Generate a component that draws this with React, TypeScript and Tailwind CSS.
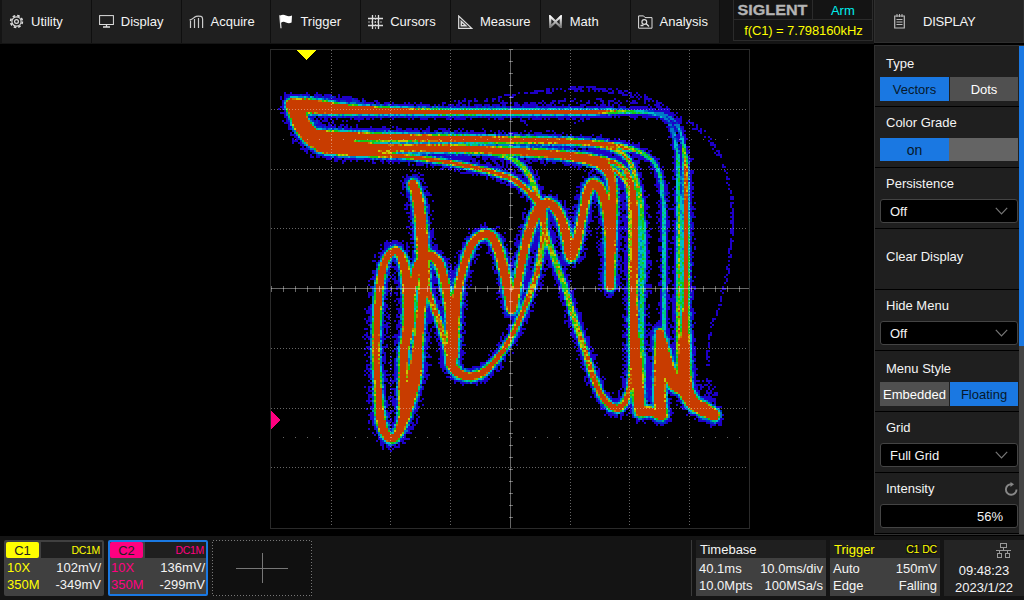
import React, { useMemo } from "react";

/* ---------- XY persistence trace ---------- */

// Each strand point is [x, y, core radius, heat]
type Pt = [number, number, number, number];
type Strand = { pts: Pt[]; halo: number; sparse?: number };

const STRANDS: Strand[] = [
  // top line falling into the first vertical
  { halo: 1.5, pts: [[292, 104, 4.5, 6], [310, 106, 6, 6], [335, 108.5, 4.5, 6], [360, 110, 3, 5.8], [400, 111, 2, 5.7], [440, 112, 1.5, 5.6], [510, 112, 1.3, 5.6], [595, 112, 1.1, 5.4], [615, 111.5, 1, 4.6], [635, 112, 1, 3.4], [655, 114, 1, 2.1], [668, 121, 1.5, 1.4], [675, 140, 1.5, 2], [678, 160, 1.1, 3], [679, 200, 1.1, 3.7], [679, 260, 1.2, 4.2], [679, 330, 1.3, 4.7], [681, 380, 3, 5.7]] },
  { halo: 3, pts: [[635, 112, 1, 3], [660, 114, 1.5, 1.8], [674, 121, 2, 1.3], [681, 135, 1, 2], [684, 150, 1, 3.6], [685.5, 165, 1.1, 5.1], [686, 200, 1.3, 5.3], [686, 300, 1.8, 5.5], [685, 335, 2.8, 6], [685, 390, 5, 6]] },
  // left corner
  { halo: 6, pts: [[291, 105, 4, 6], [297, 113, 7, 6], [302, 125, 7, 6], [311, 136, 7.5, 6], [324, 144, 7, 6], [345, 146.5, 6, 6], [375, 148, 3.5, 6]] },
  { halo: 3, pts: [[310, 134, 4, 6], [340, 136, 3.3, 6], [400, 137.5, 2.4, 5.8], [470, 139, 2.2, 5.7], [510, 140, 2.1, 5.6], [560, 141, 1.8, 5.6], [600, 144, 1.8, 5.5], [622, 147, 1.5, 5], [642, 153, 1.2, 4], [655, 164, 1.2, 3.1], [661, 180, 1.2, 2.8], [664, 220, 1.2, 2.7], [664, 330, 1.2, 2.7]] },
  { halo: 4, pts: [[320, 147, 4, 6], [400, 148, 2.3, 6], [450, 148.5, 2.6, 6], [510, 151, 2.5, 5.8], [560, 155, 3, 5.8], [590, 160, 3.7, 5.9], [604, 166, 4, 5.9], [611, 178, 3, 5.8], [613, 200, 3, 5.7], [612, 230, 3, 5.7], [610, 286, 3.2, 5.7]] },
  { halo: 4, pts: [[585, 156, 1.4, 5.5], [606, 160, 1.3, 5.1], [622, 167, 1.3, 5], [630, 180, 1.7, 5.4], [634, 205, 2.7, 5.7], [634.5, 250, 2.7, 5.7], [633.5, 300, 2.7, 5.7], [635, 360, 4, 6], [640, 412, 3.5, 6]] },
  { halo: 4, pts: [[600, 145, 1.2, 5.1], [620, 152, 1.2, 4.7], [631, 164, 1.3, 4.5], [637, 183, 1.3, 4.5], [641, 205, 1.4, 3.9], [643, 240, 1.6, 3.3], [642, 330, 1.6, 3.2], [643, 380, 1.5, 4]] },
  { halo: 3, pts: [[600, 162, 1.2, 5], [617, 172, 1.2, 4.7], [627, 184, 1.2, 4.5], [630, 215, 1.2, 4.2], [630, 300, 1.2, 3.8]] },
  // lower branch and large loop
  { halo: 3, pts: [[325, 149, 3.5, 6], [350, 152.5, 2, 6], [400, 156, 1.2, 5.4], [440, 161, 1.2, 5.3], [480, 169, 1.3, 5.4], [510, 178, 1.5, 5.4], [528, 191, 1.7, 5.5], [541, 207, 3, 5.7], [544, 228, 2.2, 4.9], [541, 252, 2, 4.5], [536, 276, 1.9, 4.8], [526, 304, 1.6, 5.4], [510, 339, 1.5, 5.4], [495, 361, 1.8, 5.6], [482, 373, 2.6, 5.7], [468, 376.5, 3, 5.8], [457, 372, 3.5, 5.8], [450, 362, 3.5, 5.7]] },
  { halo: 4, pts: [[470, 149, 1, 4.8], [500, 155, 1.2, 3.8], [517, 162, 1.4, 3.9], [529, 175, 1.8, 4.2], [536, 192, 1.8, 4.4], [542, 215, 2.2, 5], [546, 235, 2, 4.7], [553, 255, 1.9, 4.3], [564, 285, 1.9, 4.1], [574, 318, 2, 4.3], [584, 348, 2, 4.7], [596, 384, 1.8, 5.4], [607, 403, 2, 5.7], [617, 408.5, 2.6, 5.7], [625, 402, 2, 5.5], [630, 385, 1.6, 5], [632, 350, 1.3, 4.6]] },
  // lower-left loops
  { halo: 6, pts: [[413, 184, 3.5, 5.8], [418, 200, 4.3, 5.8], [421, 225, 4.3, 5.8], [423, 255, 5, 5.8], [424, 282, 4.3, 5.8], [421, 310, 3, 5.8], [418, 345, 3.5, 5.8], [415, 372, 5.5, 5.8], [410, 395, 5.5, 5.8], [404, 418, 4, 5.8], [397, 435, 3, 5.8], [391, 439, 3, 5.8], [384, 431, 3.2, 5.8], [380, 415, 3.3, 5.8], [378, 385, 2.2, 5.7], [376, 350, 2.4, 5.7], [378, 305, 2.6, 5.7], [382, 272, 2.7, 5.7], [388, 256, 2.4, 5.7], [396, 250.5, 2.6, 5.7], [402, 259, 3.2, 5.8], [407, 282, 4, 5.8], [409, 320, 4.6, 5.8], [404, 352, 3.3, 5.8], [403, 390, 3.3, 5.8], [402, 415, 2, 5.8]] },
  { halo: 4, pts: [[410, 310, 2, 5.6], [414, 285, 2.5, 5.7], [418, 265, 3, 5.8], [428, 255, 3.2, 5.8], [438, 262, 3.5, 5.8], [444, 280, 3, 5.8], [449, 308, 3, 5.7], [452, 340, 4, 5.8], [452, 362, 3.5, 5.8]] },
  { halo: 4.5, pts: [[453, 355, 4, 5.8], [455, 310, 4, 5.8], [458, 290, 3, 5.8], [464, 265, 2.7, 5.7], [472, 244, 2.8, 5.7], [482, 235, 3, 5.8], [491, 236, 3.4, 5.8], [499, 252, 3.5, 5.8], [505, 275, 3.5, 5.8], [510, 300, 3.5, 5.8], [512, 309, 3.5, 5.8], [517, 286, 3, 5.8], [524, 251, 2.8, 5.7], [532, 223, 3.4, 5.8], [540, 208, 4, 5.8], [549, 203, 3.2, 5.8], [558, 212, 3.4, 5.8], [566, 234, 3.5, 5.8], [571, 257, 3.5, 5.8], [577, 241, 3.5, 5.8], [583, 213, 2.7, 5.7], [588, 191, 3.2, 5.8], [593, 183.5, 3.4, 5.8], [601, 190, 3.5, 5.8], [607, 212, 3.5, 5.8], [610, 240, 3.6, 5.8], [610, 286, 3.2, 5.8]] },
  { halo: 4, pts: [[424, 282, 3, 5.7], [432, 303, 1.6, 5.2], [440, 325, 1.8, 5], [445, 343, 1.7, 4.7], [450, 364, 2, 5.3]] },
  // bottom-right cluster
  { halo: 4, pts: [[636, 340, 2.5, 6], [638, 385, 4.5, 6], [641, 411, 4, 6], [649, 411, 3, 6], [660, 415, 3.5, 6]] },
  { halo: 4, pts: [[660, 333, 3, 6], [660, 370, 4.5, 6], [660, 400, 4.5, 6], [662, 415, 4, 6]] },
  { halo: 4, pts: [[662, 340, 3, 6], [667, 365, 5, 6], [675, 383, 6, 6], [684, 389, 6, 6], [693, 403, 5.5, 6], [705, 410, 5.5, 6], [714, 415, 4.5, 6]] },
  { halo: 3, pts: [[685, 335, 3, 6], [684, 375, 6, 6], [686, 393, 5, 6]] },
  // faint excursions
  { halo: 1, sparse: 0.55, pts: [[500, 98, 1, 0], [520, 94, 1, 0], [560, 90, 1.5, 0], [590, 89, 1.5, 0], [620, 92, 2, 0], [645, 98, 2, 0], [662, 107, 2.5, 0], [676, 118, 2.5, 0], [690, 124, 2, 0], [705, 135, 2, 0], [716, 150, 1.5, 0], [727, 175, 1, 0], [732, 205, 1, 0], [732, 232, 1, 0], [728, 268, 1, 0], [720, 302, 1, 0], [711, 330, 1, 0], [708, 365, 1, 0]] },
  { halo: 2, sparse: 0.42, pts: [[370, 104, 2, 0], [440, 106, 1.5, 0], [510, 105, 1, 0], [560, 102, 1, 0], [620, 102, 1.5, 0], [655, 109, 2, 0], [675, 119, 5, 0]] },
  { halo: 3, sparse: 0.85, pts: [[300, 97, 2, 0], [330, 99, 3, 0], [365, 104, 2, 0]] },
  { halo: 2, sparse: 0.22, pts: [[440, 106, 2, 0], [480, 101, 3, 0], [510, 97, 1, 0]] },
  { halo: 3, sparse: 0.4, pts: [[310, 118, 3, 0], [340, 119, 2, 0], [370, 118, 1, 0]] },
  { halo: 3, sparse: 0.35, pts: [[330, 128, 2, 0], [370, 130, 2, 0], [440, 131, 1, 0]] },
  { halo: 3, sparse: 0.8, pts: [[314, 117, 3, 0], [314, 125, 4, 0], [325, 129, 3, 0]] },
  { halo: 3, sparse: 0.5, pts: [[700, 383, 3, 0], [708, 386, 4, 0], [711, 398, 4, 0]] },
  { halo: 2, sparse: 0.4, pts: [[649, 350, 2, 0], [649, 375, 5, 0], [651, 395, 3, 0]] },
  { halo: 2, sparse: 0.4, pts: [[670, 300, 3, 0], [672, 345, 4, 0], [674, 362, 2, 0]] },
  { halo: 2, sparse: 0.12, pts: [[515, 121, 3, 0], [530, 121, 2, 0]] },
  { halo: 2, sparse: 0.12, pts: [[565, 120, 2, 0], [582, 120, 2, 0]] },
];

const PALETTE: [number, string][] = [
  [5, "#c83c00"],
  [4.7, "#c87800"],
  [4.35, "#c8c800"],
  [4.0, "#78c800"],
  [3.4, "#14c814"],
  [2.9, "#00c878"],
  [2.2, "#00bec8"],
  [1.5, "#0078c8"],
  [0.9, "#0032c8"],
  [0.1, "#1e00c8"],
];

function noise(x: number, y: number) {
  let n = (Math.imul(x, 374761393) + Math.imul(y, 668265263)) | 0;
  n = Math.imul(n ^ (n >>> 13), 1274126177);
  return ((n ^ (n >>> 16)) >>> 0) / 4294967296;
}

function smooth(pts: Pt[]): Pt[] {
  const out: Pt[] = [];
  for (let i = 0; i < pts.length - 1; i++) {
    const a = pts[Math.max(0, i - 1)];
    const b = pts[i];
    const c = pts[i + 1];
    const d = pts[Math.min(pts.length - 1, i + 2)];
    const len = Math.hypot(c[0] - b[0], c[1] - b[1]);
    const steps = Math.max(2, Math.ceil(len));
    // tangents are scaled by local chord ratio so uneven spacing does not overshoot
    const lp = Math.hypot(b[0] - a[0], b[1] - a[1]) || len;
    const ln = Math.hypot(d[0] - c[0], d[1] - c[1]) || len;
    for (let s = 0; s < steps; s++) {
      const t = s / steps;
      const t2 = t * t;
      const t3 = t2 * t;
      const p = [0, 0];
      for (const k of [0, 1]) {
        const m1 = ((c[k] - a[k]) * len) / (len + lp);
        const m2 = ((d[k] - b[k]) * len) / (len + ln);
        p[k] = (2 * t3 - 3 * t2 + 1) * b[k] + (t3 - 2 * t2 + t) * m1 + (-2 * t3 + 3 * t2) * c[k] + (t3 - t2) * m2;
      }
      out.push([p[0], p[1], b[2] + (c[2] - b[2]) * t, b[3] + (c[3] - b[3]) * t]);
    }
  }
  out.push(pts[pts.length - 1]);
  return out;
}

function buildTrace() {
  const N = 240;
  const OX = 270;
  const OY = 50;
  const level = new Float32Array(N * N);
  STRANDS.forEach((s, si) => {
    const best = new Float32Array(N * N).fill(-99);
    for (const [x, y, r, h] of smooth(s.pts)) {
      const R = r + s.halo + 6;
      const x0 = Math.max(0, Math.floor((x - R - OX) / 2));
      const x1 = Math.min(N - 1, Math.ceil((x + R - OX) / 2));
      const y0 = Math.max(0, Math.floor((y - R - OY) / 2));
      const y1 = Math.min(N - 1, Math.ceil((y + R - OY) / 2));
      for (let j = y0; j <= y1; j++)
        for (let i = x0; i <= x1; i++) {
          const e = Math.max(0, Math.hypot(OX + i * 2 + 1 - x, OY + j * 2 + 1 - y) - r);
          const n = noise(i + si * 311, j + si * 97);
          let v = -99;
          if (s.sparse) {
            if (e < s.halo && n < s.sparse * (1 - e / (s.halo + 1))) v = 0.3 + n;
          } else {
            // steep edge next to the core, then a slower fade
            v = h - 1.7 * Math.min(e, 2) - 0.85 * Math.max(0, e - 2);
            if (e > 0 || h < 5.3) v += (n - 0.5) * 1.3;
            if (v < 0.9) {
              const solid = Math.min(h * 0.75, 3.9);
              const prob = 0.9 - (e - solid) / (s.halo + 2);
              v = e < solid || n < prob * 0.85 ? 0.3 : -99;
            }
          }
          const q = j * N + i;
          if (v > best[q]) best[q] = v;
        }
    }
    for (let q = 0; q < best.length; q++) if (best[q] > level[q]) level[q] = best[q];
  });
  const paths = PALETTE.map(() => "");
  for (let j = 0; j < N; j++) {
    let i = 0;
    while (i < N) {
      const c = PALETTE.findIndex(([t]) => level[j * N + i] >= t);
      let k = i + 1;
      while (k < N && PALETTE.findIndex(([t]) => level[j * N + k] >= t) === c) k++;
      if (c >= 0) paths[c] += `M${i * 2} ${j * 2 + 1}h${(k - i) * 2}v2h${(i - k) * 2}z`;
      i = k;
    }
  }
  return paths;
}

const steps = (from: number, to: number, by: number) =>
  Array.from({ length: Math.floor((to - from) / by) + 1 }, (_, i) => from + i * by);

function Scope() {
  const paths = useMemo(buildTrace, []);
  return (
    <svg width="480" height="480" viewBox="0 0 480 480" shapeRendering="crispEdges" className="block shrink-0">
      {paths.map((d, i) => (
        <path key={i} d={d} fill={PALETTE[i][1]} />
      ))}
      <rect x="0.5" y="0.5" width="479" height="479" fill="none" stroke="#2a2a2a" />
      <g stroke="#fff" strokeOpacity="0.4" strokeWidth="1">
        {[61, 120, 180, 300, 359, 419].map((x) => (
          <line key={x} x1={x + 0.5} x2={x + 0.5} y1="1" y2="478" strokeDasharray="1 2" />
        ))}
        {[60, 120, 179, 299, 359, 418].map((y) => (
          <line key={y} y1={y + 0.5} y2={y + 0.5} x1="1" x2="478" strokeDasharray="1 2" />
        ))}
        {[90, 388].map((y) => (
          <line key={y} y1={y + 0.5} y2={y + 0.5} x1="13" x2="470" strokeDasharray="1 11" />
        ))}
        <line x1="240.5" x2="240.5" y1="1" y2="479" />
        <line x1="1" x2="479" y1="239.5" y2="239.5" />
        {steps(1, 470, 12).map((p) => (
          <React.Fragment key={p}>
            <line x1={p + 0.5} x2={p + 0.5} y1="237" y2="243" />
            <line y1={p - 0.5} y2={p - 0.5} x1="239" x2="243" />
          </React.Fragment>
        ))}
      </g>
      <polygon points="26,1 46,1 36,11" fill="#ff0" />
      <polygon points="1,362 10,371 1,380" fill="#ff0080" />
    </svg>
  );
}

/* ---------- Icons ---------- */

const ico = "block shrink-0";

const GearIcon = () => (
  <svg width="15" height="15" viewBox="0 0 15 15" className={ico} fill="none" stroke="#ddd">
    <circle cx="7.5" cy="7.5" r="5.9" strokeWidth="1.6" strokeDasharray="2.6 2.03" />
    <circle cx="7.5" cy="7.5" r="4.6" strokeWidth="1.1" />
    <circle cx="7.5" cy="7.5" r="1.9" strokeWidth="1.2" />
  </svg>
);
const MonitorIcon = () => (
  <svg width="15" height="13" viewBox="0 0 15 13" className={ico} fill="none" stroke="#ddd">
    <rect x="0.6" y="0.6" width="13.8" height="8.9" />
    <path d="M7.5 9.5v2.2M4 12h7" strokeWidth="1.3" />
  </svg>
);
const AcquireIcon = () => (
  <svg width="15" height="14" viewBox="0 0 15 14" className={ico} fill="none" stroke="#ccc">
    <path d="M.5 5C3 4.600 4 3.500 5.500 2.200S9 .8 12 1.300c1.200.3 1.600 1.200 1.600 2.700V13" strokeWidth="1.200" />
    <path d="M1.500 5.500V13M5.500 4V13M9.500 3V13" strokeWidth="1.2" />
  </svg>
);
const FlagIcon = () => (
  <svg width="14" height="15" viewBox="0 0 14 15" className={ico}>
    <path d="M.8 1.200 2 14.200" stroke="#ddd" strokeWidth="1.3" />
    <path d="M1 1.800C3 .3 5 .5 7 1.500s4 .9 6 0l-.4 7C10.500 9.600 9 9.400 7 8.400s-3.500-.8-5.300.5z" fill="#fff" />
  </svg>
);
const HashIcon = () => (
  <svg width="15" height="14" viewBox="0 0 15 14" className={ico} stroke="#ddd">
    <path d="M4.500 0v14M10.500 0v14M0 3.500h15M0 10.500h15" strokeWidth="1.300" />
    <path d="M7.500 0v14M0 7h15" strokeDasharray="2 1" strokeOpacity="0.700" />
  </svg>
);
const TriangleIcon = () => (
  <svg width="15" height="14" viewBox="0 0 15 14" className={ico} fill="none" stroke="#ddd">
    <path d="M.7 1v12.300h13z" strokeWidth="1.200" />
    <path d="M3.300 6.500v4.300h4.500z" strokeWidth="1.500" />
  </svg>
);
const MathIcon = () => (
  <svg width="13" height="13" viewBox="0 0 13 13" className={ico} fill="none">
    <defs>
      <linearGradient id="mg" x1="0" y1="0" x2="0" y2="1">
        <stop offset="0" stopColor="#fff" />
        <stop offset="1" stopColor="#777" />
      </linearGradient>
    </defs>
    <path d="M1.200 12V1.500L6.500 6.500 11.800 1.500V12L6.500 7z" stroke="url(#mg)" strokeWidth="2.200" />
  </svg>
);
const AnalysisIcon = () => (
  <svg width="15" height="14" viewBox="0 0 15 14" className={ico} fill="none" stroke="#ddd">
    <path d="M.6 13.200V.9h5l1.400 1.700h7v10.600z" />
    <circle cx="6.300" cy="7" r="2.400" strokeWidth="1.200" />
    <path d="m8 8.600 3 3M2.500 10.500h3" strokeWidth="1.400" />
  </svg>
);
const NotepadIcon = () => (
  <svg width="11" height="15" viewBox="0 0 11 15" className={ico} fill="none" stroke="#bbb">
    <path d="M.7 2h9.600v12H.7z" strokeWidth="1.200" />
    <path d="M3 0v3M5.500 0v3M8 0v3M2.500 5.500h6M2.500 8h6M2.500 10.500h6" />
  </svg>
);
const Chevron = () => (
  <svg width="13" height="8" viewBox="0 0 13 8" className={ico} fill="none" stroke="#777" strokeWidth="1.200">
    <path d="m.8.8 5.700 6 5.700-6" />
  </svg>
);
const ResetIcon = () => (
  <svg width="14" height="14" viewBox="0 0 14 14" className={ico} fill="none">
    <path d="M12.500 7.500a5.300 5.300 0 1 1-5-5.300" stroke="#888" strokeWidth="1.900" />
    <path d="M6.500 0 10 2.200 6.500 5z" fill="#888" />
  </svg>
);
const NetworkIcon = () => (
  <svg width="15" height="15" viewBox="0 0 15 15" className={ico} fill="none" stroke="#999" shapeRendering="crispEdges">
    <path d="M4.500.5h6v4h-6zM7.500 5v2.500M0 7.500h15M3.500 8v2M11.500 8v2M1.500 10.500h4v4h-4zM9.500 10.500h4v4h-4z" />
  </svg>
);

/* ---------- Panels ---------- */

const NAV = [
  { label: "Utility", icon: <GearIcon /> },
  { label: "Display", icon: <MonitorIcon /> },
  { label: "Acquire", icon: <AcquireIcon /> },
  { label: "Trigger", icon: <FlagIcon /> },
  { label: "Cursors", icon: <HashIcon /> },
  { label: "Measure", icon: <TriangleIcon /> },
  { label: "Math", icon: <MathIcon /> },
  { label: "Analysis", icon: <AnalysisIcon /> },
];

function TopBar() {
  return (
    <header className="flex h-[44px] shrink-0 bg-[#141414]">
      <nav className="ml-[2px] flex">
        {NAV.map((n) => (
          <div key={n.label} className="flex h-[43px] w-[89.8px] items-center border-r border-[#0f0f0f] bg-[#1f1f1f] pl-[7px]">
            <span className="flex w-[15px] justify-center">{n.icon}</span>
            <span className="ml-[7px]">{n.label}</span>
          </div>
        ))}
      </nav>
      <div className="ml-[13px] flex h-[41px] w-[140px] shrink-0 flex-col border border-t-0 border-[#2b2b2b]">
        <div className="flex h-[20px] border-b border-[#2b2b2b]">
          <div className="flex w-[79px] items-center justify-center border-r border-[#2b2b2b]">
            <svg width="76" height="19" className="block">
              <text x="2.500" y="14.500" textLength="70" lengthAdjust="spacingAndGlyphs" fill="#b4b4b4" stroke="#b4b4b4" strokeWidth="0.300" fontSize="15" fontWeight="700">
                SIGLENT
              </text>
            </svg>
          </div>
          <div className="flex flex-1 items-center justify-center pt-px text-[#0ee]">Arm</div>
        </div>
        <div className="flex flex-1 items-center justify-center whitespace-nowrap text-[#ff0] tracking-[-0.1px]">f(C1) = 7.798160kHz</div>
      </div>
    </header>
  );
}

type RowProps = { label: string; low?: boolean; extra?: React.ReactNode; children?: React.ReactNode };

function Row({ label, low, extra, children }: RowProps) {
  return (
    <div className="flex h-[61px] flex-col border-b border-black bg-[#1f1f1f] pl-[5px]">
      <div className={`flex h-[31px] items-center justify-between pl-[6px] pr-px ${low ? "pt-[4px]" : ""}`}>
        <span>{label}</span>
        {extra}
      </div>
      {children}
    </div>
  );
}

function Toggle({ left, right, active }: { left: string; right: string; active: 0 | 1 }) {
  const on = "bg-[#1a78e2] text-[#06182c]";
  const off = "bg-[#505050] text-white";
  return (
    <div className="flex h-[24px] w-[138px] gap-px">
      <div className={`flex w-[69px] items-center justify-center ${active === 0 ? on : off}`}>{left}</div>
      <div className={`flex w-[68px] items-center justify-center ${active === 1 ? on : off}`}>{right}</div>
    </div>
  );
}

function Select({ value }: { value: string }) {
  return (
    <div className="flex h-[24px] w-[138px] items-center justify-between rounded-[3px] border border-[#444] bg-black pl-[9px] pr-[9px]">
      <span>{value}</span>
      <Chevron />
    </div>
  );
}

function SidePanel() {
  return (
    <aside className="flex w-[150px] shrink-0 flex-col bg-black">
      <div className="flex h-[43px] items-center border border-t-0 border-[#2e2e2e] bg-[#242424] pl-[19px]">
        <NotepadIcon />
        <span className="ml-[18px] tracking-[-0.2px]">DISPLAY</span>
      </div>
      <div className="mt-[2px] flex h-[490px] border border-r-0 border-[#303030]">
        <div className="w-[144px] shrink-0 bg-[#1f1f1f]">
          <Row label="Type" low>
            <Toggle left="Vectors" right="Dots" active={0} />
          </Row>
          <Row label="Color Grade">
            <div className="flex h-[23px] w-[138px] bg-[#646464]">
              <div className="flex w-[69px] items-center justify-center bg-[#1a78e2] text-[14px] text-[#06182c]">on</div>
            </div>
          </Row>
          <Row label="Persistence">
            <Select value="Off" />
          </Row>
          <div className="flex h-[61px] items-center border-b border-black pl-[11px] pb-[6px]">Clear Display</div>
          <Row label="Hide Menu">
            <Select value="Off" />
          </Row>
          <Row label="Menu Style" low>
            <Toggle left="Embedded" right="Floating" active={1} />
          </Row>
          <Row label="Grid">
            <Select value="Full Grid" />
          </Row>
          <Row label="Intensity" extra={<ResetIcon />}>
            <div className="flex h-[24px] w-[138px] items-center justify-end rounded-[3px] border border-[#444] bg-black pr-[14px]">56%</div>
          </Row>
        </div>
        <div className="flex-1 bg-[#444]">
          <div className="h-[300px] bg-[#1a78e2]" />
        </div>
      </div>
    </aside>
  );
}

type ChannelProps = { name: string; accent: string; chip: string; frame: string; scale: string; offset: string };

function Channel({ name, accent, chip, frame, scale, offset }: ChannelProps) {
  return (
    <div className={`flex h-[56px] w-[100px] flex-col rounded-[2px] border-2 bg-[#404040] ${frame}`}>
      <div className="flex h-[16px] gap-[2px]">
        <div className={`flex w-[33px] items-center justify-center rounded-[2px] ${chip}`}>{name}</div>
        <div className={`flex flex-1 items-center justify-end bg-[#1f1f1f] pr-[2px] text-[10.500px] tracking-[-0.3px] ${accent}`}>DC1M</div>
      </div>
      <div className="flex h-[18px] items-center justify-between pl-px pr-px pt-px">
        <span className={accent}>10X</span>
        <span>{scale}</span>
      </div>
      <div className="flex h-[17px] items-center justify-between pl-px pr-px">
        <span className={accent}>350M</span>
        <span>{offset}</span>
      </div>
    </div>
  );
}

function InfoBox({ width, head, rows }: { width: string; head: React.ReactNode; rows: [string, string][] }) {
  return (
    <div className={`flex h-[56px] flex-col bg-[#404040] ${width}`}>
      <div className="flex h-[18px] items-center justify-between bg-[#1f1f1f] pl-[4px] pr-[3px]">{head}</div>
      <div className="flex flex-col pt-[2px]">
        {rows.map(([a, b]) => (
          <div key={a} className="flex h-[17px] items-center justify-between pl-[3px] pr-[3px]">
            <span>{a}</span>
            <span>{b}</span>
          </div>
        ))}
      </div>
    </div>
  );
}

function BottomBar() {
  return (
    <footer className="flex h-[64px] shrink-0 gap-[4px] bg-[#141414] pl-[4px] pt-[4px]">
      <Channel name="C1" accent="text-[#ff0]" chip="bg-[#ff0] text-[#222]" frame="border-[#404040]" scale="102mV/" offset="-349mV" />
      <Channel name="C2" accent="text-[#ff0080]" chip="bg-[#ff0080] text-[#222]" frame="border-[#1a78e2]" scale="136mV/" offset="-299mV" />
      <svg width="100" height="56" className="block" shapeRendering="crispEdges" fill="none">
        <rect x="0.500" y="0.500" width="99" height="55" fill="#101010" stroke="#777" strokeDasharray="1 2" />
        <path d="M24 28.500h52M50.500 13v30" stroke="#777" />
      </svg>
      <div className="ml-auto h-[56px] w-px bg-[#3a3a3a]" />
      <InfoBox
        width="w-[130px]"
        head={<span>Timebase</span>}
        rows={[
          ["40.1ms", "10.0ms/div"],
          ["10.0Mpts", "100MSa/s"],
        ]}
      />
      <InfoBox
        width="w-[110px]"
        head={
          <>
            <span className="text-[#ff0]">Trigger</span>
            <span className="flex gap-[3px] text-[10.500px] tracking-[-0.2px] text-[#ff0]">
              <span className="bg-[#141414]">C1</span>
              <span className="bg-[#141414]">DC</span>
            </span>
          </>
        }
        rows={[
          ["Auto", "150mV"],
          ["Edge", "Falling"],
        ]}
      />
      <div className="flex h-[56px] w-[80px] flex-col items-center bg-[#242424] pt-[3px]">
        <div className="flex w-full justify-end pr-[13px]">
          <NetworkIcon />
        </div>
        <div className="mt-[4px] h-[17px] leading-[17px]">09:48:23</div>
        <div className="h-[17px] leading-[17px]">2023/1/22</div>
      </div>
    </footer>
  );
}

export default function App() {
  return (
    <div className="flex h-[600px] w-[1024px] flex-col overflow-hidden bg-black font-['Liberation_Sans',Arial,sans-serif] text-[13px] leading-none text-[#f4f4f4]">
      <div className="flex h-[536px] shrink-0">
        <main className="flex w-[874px] shrink-0 flex-col">
          <TopBar />
          <div className="flex pl-[270px] pt-[5px]">
            <Scope />
          </div>
        </main>
        <SidePanel />
      </div>
      <BottomBar />
    </div>
  );
}
